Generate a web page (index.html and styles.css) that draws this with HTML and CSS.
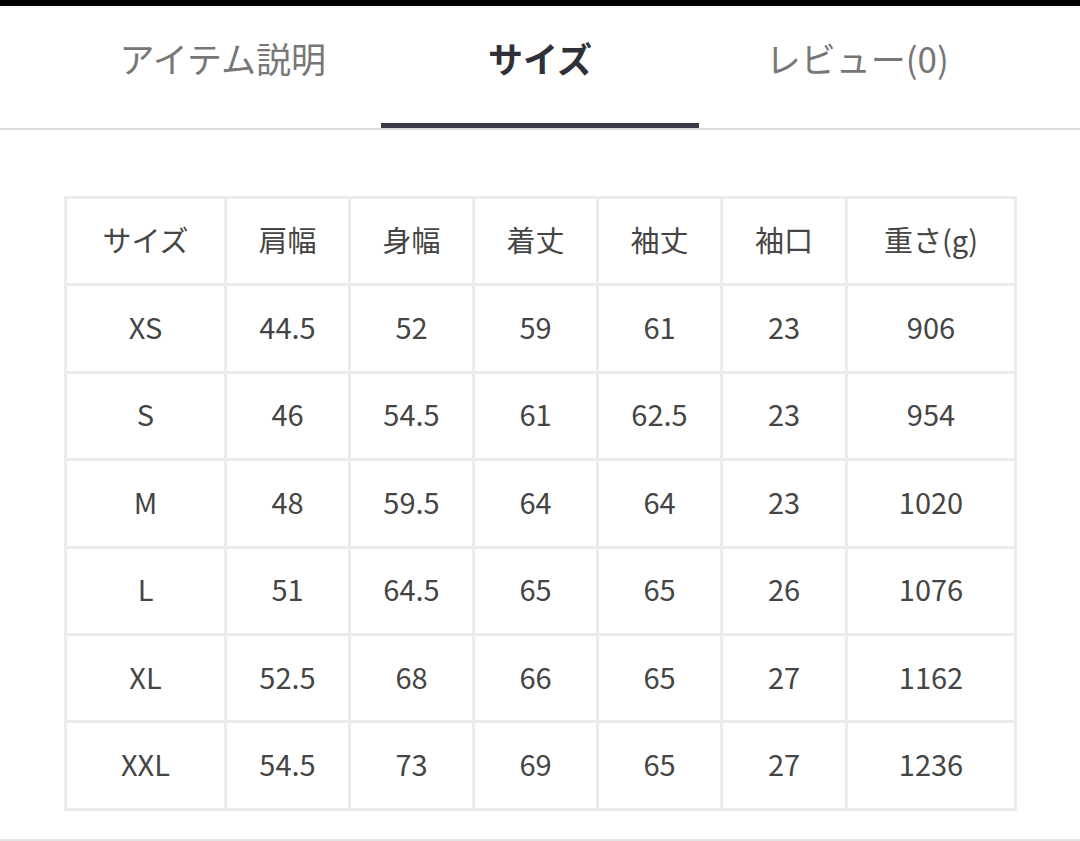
FILE: index.html
```html
<!DOCTYPE html>
<html lang="ja">
<head>
<meta charset="utf-8">
<title>サイズ</title>
<link rel="stylesheet" href="styles.css">
</head>
<body>
<div class="topbar"></div>
<nav class="tabs">
  <div class="tab">アイテム説明</div>
  <div class="tab active">サイズ</div>
  <div class="tab">レビュー(0)</div>
</nav>
<main class="content">
  <table class="size-table">
    <colgroup>
      <col class="c1"><col class="c2"><col class="c2"><col class="c2"><col class="c2"><col class="c6"><col class="c7">
    </colgroup>
    <tr><td>サイズ</td><td>肩幅</td><td>身幅</td><td>着丈</td><td>袖丈</td><td>袖口</td><td>重さ(g)</td></tr>
    <tr><td>XS</td><td>44.5</td><td>52</td><td>59</td><td>61</td><td>23</td><td>906</td></tr>
    <tr><td>S</td><td>46</td><td>54.5</td><td>61</td><td>62.5</td><td>23</td><td>954</td></tr>
    <tr><td>M</td><td>48</td><td>59.5</td><td>64</td><td>64</td><td>23</td><td>1020</td></tr>
    <tr><td>L</td><td>51</td><td>64.5</td><td>65</td><td>65</td><td>26</td><td>1076</td></tr>
    <tr><td>XL</td><td>52.5</td><td>68</td><td>66</td><td>65</td><td>27</td><td>1162</td></tr>
    <tr><td>XXL</td><td>54.5</td><td>73</td><td>69</td><td>65</td><td>27</td><td>1236</td></tr>
  </table>
</main>
<div class="bottom-line"></div>
</body>
</html>
```
FILE: styles.css
```css
html, body {
  margin: 0;
  padding: 0;
  background: #fff;
  font-family: "Noto Sans CJK JP", "Noto Sans", sans-serif;
}
.topbar {
  height: 6px;
  background: #000;
}
.tabs {
  display: flex;
  padding: 0 64px;
  border-bottom: 2px solid #dcdcdc;
}
.tab {
  flex: 1;
  text-align: center;
  font-size: 35px;
  line-height: 50px;
  padding-top: 27px;
  padding-bottom: 40px;
  border-bottom: 5px solid transparent;
  color: #777;
}
.tab.active {
  color: #2f3038;
  font-weight: 700;
  border-bottom-color: #3a3b46;
}
.content {
  padding: 66px 0 28px 64px;
}
.size-table {
  border-collapse: collapse;
  table-layout: fixed;
  width: 950px;
}
.c1 { width: 160px; }
.c2 { width: 124px; }
.c6 { width: 125px; }
.c7 { width: 169px; }
.size-table tr {
  height: 87.4px;
}
.size-table td {
  border: 3px solid #ececec;
  text-align: center;
  vertical-align: middle;
  font-size: 29px;
  color: #454545;
  padding: 0 0 5px;
}
.bottom-line {
  border-top: 2px solid #e3e3e3;
}
```
